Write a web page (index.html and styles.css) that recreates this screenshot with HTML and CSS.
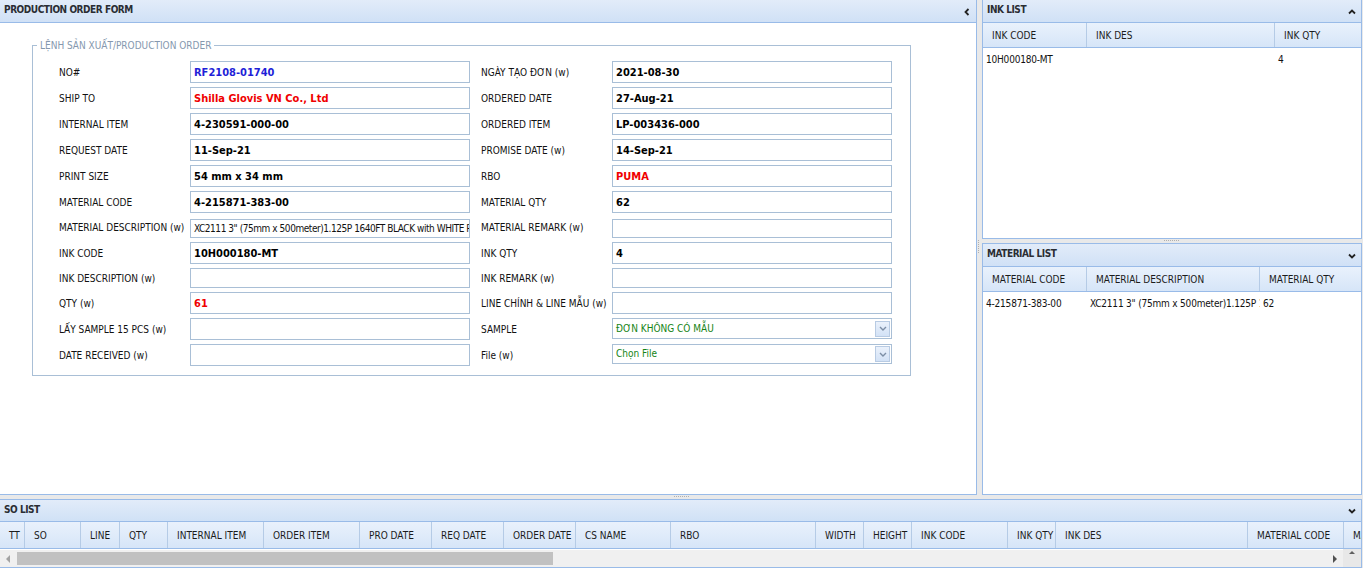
FILE: index.html
```html
<!DOCTYPE html>
<html lang="vi">
<head>
<meta charset="utf-8">
<title>Production Order Form</title>
<link rel="stylesheet" href="styles.css">
</head>
<body>
<div class="app">
  <div class="top">
    <section class="panel form-panel">
      <header class="ph">
        <span class="pt">PRODUCTION ORDER FORM</span>
        <svg class="tool" width="8" height="8" viewBox="0 0 8 8"><path d="M5.5 1 L2.5 4 L5.5 7" fill="none" stroke="#222" stroke-width="1.8"/></svg>
      </header>
      <div class="form-body">
        <fieldset class="fs">
          <legend class="lg">LỆNH SẢN XUẤT/PRODUCTION ORDER</legend>
          <div class="fgrid">
            <span class="lb">NO#</span><div class="inp v blue">RF2108-01740</div>
            <span class="lb lb2">NGÀY TẠO ĐƠN (w)</span><div class="inp v">2021-08-30</div>

            <span class="lb">SHIP TO</span><div class="inp v red">Shilla Glovis VN Co., Ltd</div>
            <span class="lb lb2">ORDERED DATE</span><div class="inp v">27-Aug-21</div>

            <span class="lb">INTERNAL ITEM</span><div class="inp v">4-230591-000-00</div>
            <span class="lb lb2">ORDERED ITEM</span><div class="inp v">LP-003436-000</div>

            <span class="lb">REQUEST DATE</span><div class="inp v">11-Sep-21</div>
            <span class="lb lb2">PROMISE DATE (w)</span><div class="inp v">14-Sep-21</div>

            <span class="lb">PRINT SIZE</span><div class="inp v">54 mm x 34 mm</div>
            <span class="lb lb2">RBO</span><div class="inp v red">PUMA</div>

            <span class="lb">MATERIAL CODE</span><div class="inp v">4-215871-383-00</div>
            <span class="lb lb2">MATERIAL QTY</span><div class="inp v">62</div>

            <span class="lb">MATERIAL DESCRIPTION (w)</span><div class="inp thin tight">XC2111 3" (75mm x 500meter)1.125P 1640FT BLACK with WHITE PLAIN CORE</div>
            <span class="lb lb2">MATERIAL REMARK (w)</span><div class="inp thin"></div>

            <span class="lb">INK CODE</span><div class="inp v">10H000180-MT</div>
            <span class="lb lb2">INK QTY</span><div class="inp v">4</div>

            <span class="lb">INK DESCRIPTION (w)</span><div class="inp"></div>
            <span class="lb lb2">INK REMARK (w)</span><div class="inp"></div>

            <span class="lb">QTY (w)</span><div class="inp v red">61</div>
            <span class="lb lb2">LINE CHÍNH &amp; LINE MẪU (w)</span><div class="inp"></div>

            <span class="lb">LẤY SAMPLE 15 PCS (w)</span><div class="inp"></div>
            <span class="lb lb2">SAMPLE</span>
            <div class="inp sel s1"><span class="st">ĐƠN KHÔNG CÓ MẪU</span><span class="trig"><svg width="8" height="5" viewBox="0 0 8 5"><path d="M1 1 L4 4 L7 1" fill="none" stroke="#7c8ea5" stroke-width="1.4"/></svg></span></div>

            <span class="lb">DATE RECEIVED (w)</span><div class="inp"></div>
            <span class="lb lb2">File (w)</span>
            <div class="inp sel s2"><span class="st">Chọn File</span><span class="trig"><svg width="8" height="5" viewBox="0 0 8 5"><path d="M1 1 L4 4 L7 1" fill="none" stroke="#7c8ea5" stroke-width="1.4"/></svg></span></div>
          </div>
        </fieldset>
      </div>
    </section>

    <div class="vsplit"><span class="grip-v"></span></div>

    <div class="side">
      <section class="panel ink">
        <header class="ph">
          <span class="pt">INK LIST</span>
          <svg class="tool" width="8" height="8" viewBox="0 0 8 8"><path d="M1 5.5 L4 2.5 L7 5.5" fill="none" stroke="#222" stroke-width="1.8"/></svg>
        </header>
        <div class="gh">
          <span class="hc w104">INK CODE</span>
          <span class="hc w188">INK DES</span>
          <span class="hc grow">INK QTY</span>
        </div>
        <div class="gr">
          <span class="dc w104">10H000180-MT</span>
          <span class="dc w188"></span>
          <span class="dc grow">4</span>
        </div>
      </section>

      <div class="split-s"><span class="grip-h"></span></div>

      <section class="panel mat">
        <header class="ph">
          <span class="pt">MATERIAL LIST</span>
          <svg class="tool" width="8" height="8" viewBox="0 0 8 8"><path d="M1 2.5 L4 5.5 L7 2.5" fill="none" stroke="#222" stroke-width="1.8"/></svg>
        </header>
        <div class="gh">
          <span class="hc w104">MATERIAL CODE</span>
          <span class="hc w173">MATERIAL DESCRIPTION</span>
          <span class="hc grow">MATERIAL QTY</span>
        </div>
        <div class="gr">
          <span class="dc w104">4-215871-383-00</span>
          <span class="dc w173">XC2111 3" (75mm x 500meter)1.125P 1640FT BLACK</span>
          <span class="dc grow">62</span>
        </div>
      </section>
    </div>
  </div>

  <div class="split-m"><span class="grip-h"></span></div>

  <section class="panel so">
    <header class="ph so-h">
      <span class="pt">SO LIST</span>
      <svg class="tool" width="8" height="8" viewBox="0 0 8 8"><path d="M1 2.5 L4 5.5 L7 2.5" fill="none" stroke="#222" stroke-width="1.8"/></svg>
    </header>
    <div class="gh so-gh">
      <span class="hc c25">TT</span>
      <span class="hc c56">SO</span>
      <span class="hc c39">LINE</span>
      <span class="hc c48">QTY</span>
      <span class="hc c96">INTERNAL ITEM</span>
      <span class="hc c96">ORDER ITEM</span>
      <span class="hc c72">PRO DATE</span>
      <span class="hc c72">REQ DATE</span>
      <span class="hc c72">ORDER DATE</span>
      <span class="hc c95">CS NAME</span>
      <span class="hc c145">RBO</span>
      <span class="hc c48">WIDTH</span>
      <span class="hc c48">HEIGHT</span>
      <span class="hc c96">INK CODE</span>
      <span class="hc c48">INK QTY</span>
      <span class="hc c192">INK DES</span>
      <span class="hc c96">MATERIAL CODE</span>
      <span class="hc grow">MATERIAL DESCRIPTION</span>
    </div>
    <div class="so-body">
      <div class="so-main">
        <div class="hscroll">
          <span class="arr"><svg width="5" height="8" viewBox="0 0 5 8"><path d="M4 0 L0 4 L4 8 Z" fill="#a3a3a3"/></svg></span>
          <span class="thumb"></span>
          <span class="track"></span>
          <span class="arr"><svg width="5" height="8" viewBox="0 0 5 8"><path d="M1 0 L5 4 L1 8 Z" fill="#505050"/></svg></span>
        </div>
      </div>
      <div class="vscroll"><svg width="6" height="3" viewBox="0 0 6 3"><path d="M0 3 L3 0 L6 3 Z" fill="#606060"/></svg></div>
    </div>
  </section>
</div>
</body>
</html>
```
FILE: styles.css
```css
html, body {
  margin: 0;
  padding: 0;
}
body {
  width: 1363px;
  height: 568px;
  overflow: hidden;
  background: #e9e9e9;
  font-family: "DejaVu Sans Condensed", "DejaVu Sans", sans-serif;
  font-size: 10px;
  color: #151515;
}
.app {
  display: flex;
  flex-direction: column;
  height: 568px;
}
.top {
  display: flex;
  height: 495px;
  flex: none;
}
.panel {
  background: #fff;
  border: 1px solid #99bbe8;
  box-sizing: border-box;
  display: flex;
  flex-direction: column;
  overflow: hidden;
}
.form-panel {
  width: 977px;
  border-left: 0;
  border-top: 0;
}
.ph {
  flex: none;
  height: 23px;
  box-sizing: border-box;
  border-bottom: 1px solid #99bbe8;
  background: linear-gradient(#e2ecf9, #d0e1f6);
  display: flex;
  align-items: center;
  justify-content: space-between;
  padding: 0 5px 3px 4px;
  font-weight: bold;
  color: #2a2d33;
  letter-spacing: -0.45px;
}
.ph .tool {
  margin-top: 4px;
}
.so-h {
  height: 22px;
}
.tool {
  display: block;
}
.form-body {
  flex: 1;
  padding: 16px 0 0 32px;
}
.fs {
  margin: 0;
  width: 879px;
  box-sizing: border-box;
  border: 1px solid #a9bfd6;
  padding: 9px 18px 9px 0;
}
.lg {
  margin-left: 4px;
  padding: 0 3px;
  line-height: 13px;
  color: #8598ae;
}
.fgrid {
  display: grid;
  padding-left: 26px;
  grid-template-columns: 131px 280px 142px 280px;
  grid-template-rows: 22px 22px 22px 22px 22px 22px 21px 22px 20px 22px 22px 22px;
  row-gap: 4px;
}
.lb {
  display: flex;
  align-items: center;
  white-space: nowrap;
  color: #111;
}
.lb2 {
  padding-left: 11px;
}
.inp {
  box-sizing: border-box;
  border: 1px solid #a9bfd6;
  background: #fff;
  padding: 0 3px;
  display: flex;
  align-items: center;
  white-space: nowrap;
  overflow: hidden;
  color: #111;
}
.v {
  font-weight: bold;
  font-size: 11px;
  color: #000;
}
.blue {
  color: #1f1fd8;
}
.red {
  color: #f00000;
}
.thin {
  height: 19px;
  align-self: end;
}
.tight {
  letter-spacing: -0.45px;
}
.sel {
  padding-right: 1px;
  justify-content: space-between;
  color: #158415;
}
.s1 {
  height: 21px;
}
.s2 {
  height: 20px;
}
.st {
  line-height: 16px;
  white-space: nowrap;
}
.trig {
  width: 15px;
  height: 16px;
  box-sizing: border-box;
  border: 1px solid #b8cbe3;
  background: linear-gradient(#eaf1fb, #d3e2f6);
  display: flex;
  align-items: center;
  justify-content: center;
  flex: none;
}
.vsplit {
  width: 5px;
  position: relative;
  flex: none;
}
.grip-v {
  position: absolute;
  left: 1px;
  top: 240px;
  width: 1px;
  height: 14px;
  background: repeating-linear-gradient(180deg, #b0b0b0 0 1px, transparent 1px 2px);
}
.side {
  width: 380px;
  display: flex;
  flex-direction: column;
  flex: none;
}
.ink {
  height: 239px;
  border-top: 0;
  flex: none;
}
.split-s, .split-m {
  height: 4px;
  position: relative;
  flex: none;
}
.grip-h {
  position: absolute;
  top: 1px;
  left: 50%;
  margin-left: -8px;
  width: 16px;
  height: 1px;
  background: repeating-linear-gradient(90deg, #b0b0b0 0 1px, transparent 1px 2px);
}
.mat {
  flex: 1;
}
.gh {
  flex: none;
  display: flex;
  height: 24px;
  border-bottom: 1px solid #99bbe8;
  background: linear-gradient(#e9f1fc, #d6e5f8);
}
.hc {
  box-sizing: border-box;
  border-right: 1px solid #b5cbe6;
  padding-left: 9px;
  display: flex;
  align-items: center;
  white-space: nowrap;
  overflow: hidden;
  color: #1b1b1b;
  flex: none;
}
.grow {
  flex: 1;
  border-right: 0;
}
.w104 { width: 104px; }
.w188 { width: 188px; }
.w173 { width: 173px; }
.c25 { width: 25px; }
.c39 { width: 39px; }
.c48 { width: 48px; }
.c56 { width: 56px; }
.c72 { width: 72px; }
.c95 { width: 95px; }
.c96 { width: 96px; }
.c145 { width: 145px; }
.c192 { width: 192px; }
.gr {
  display: flex;
  height: 22px;
  align-items: center;
}
.dc {
  box-sizing: border-box;
  padding-left: 3px;
  white-space: nowrap;
  overflow: hidden;
  flex: none;
  color: #111;
  letter-spacing: -0.2px;
}
.so {
  flex: 1;
  width: 1362px;
  border-left: 0;
}
.so-gh {
  height: 26px;
}
.so-body {
  flex: 1;
  display: flex;
}
.so-main {
  flex: 1;
  padding-top: 1px;
}
.hscroll {
  height: 17px;
  background: #f0f0f0;
  display: flex;
  align-items: center;
}
.arr {
  width: 17px;
  height: 17px;
  display: flex;
  align-items: center;
  justify-content: center;
  flex: none;
}
.thumb {
  width: 536px;
  height: 13px;
  background: #c1c1c1;
  flex: none;
}
.track {
  flex: 1;
}
.vscroll {
  width: 18px;
  background: #e8e8e8;
  display: flex;
  justify-content: center;
  padding-top: 2px;
  box-sizing: border-box;
  align-items: flex-start;
}
.vscroll svg {
  display: block;
}
```
